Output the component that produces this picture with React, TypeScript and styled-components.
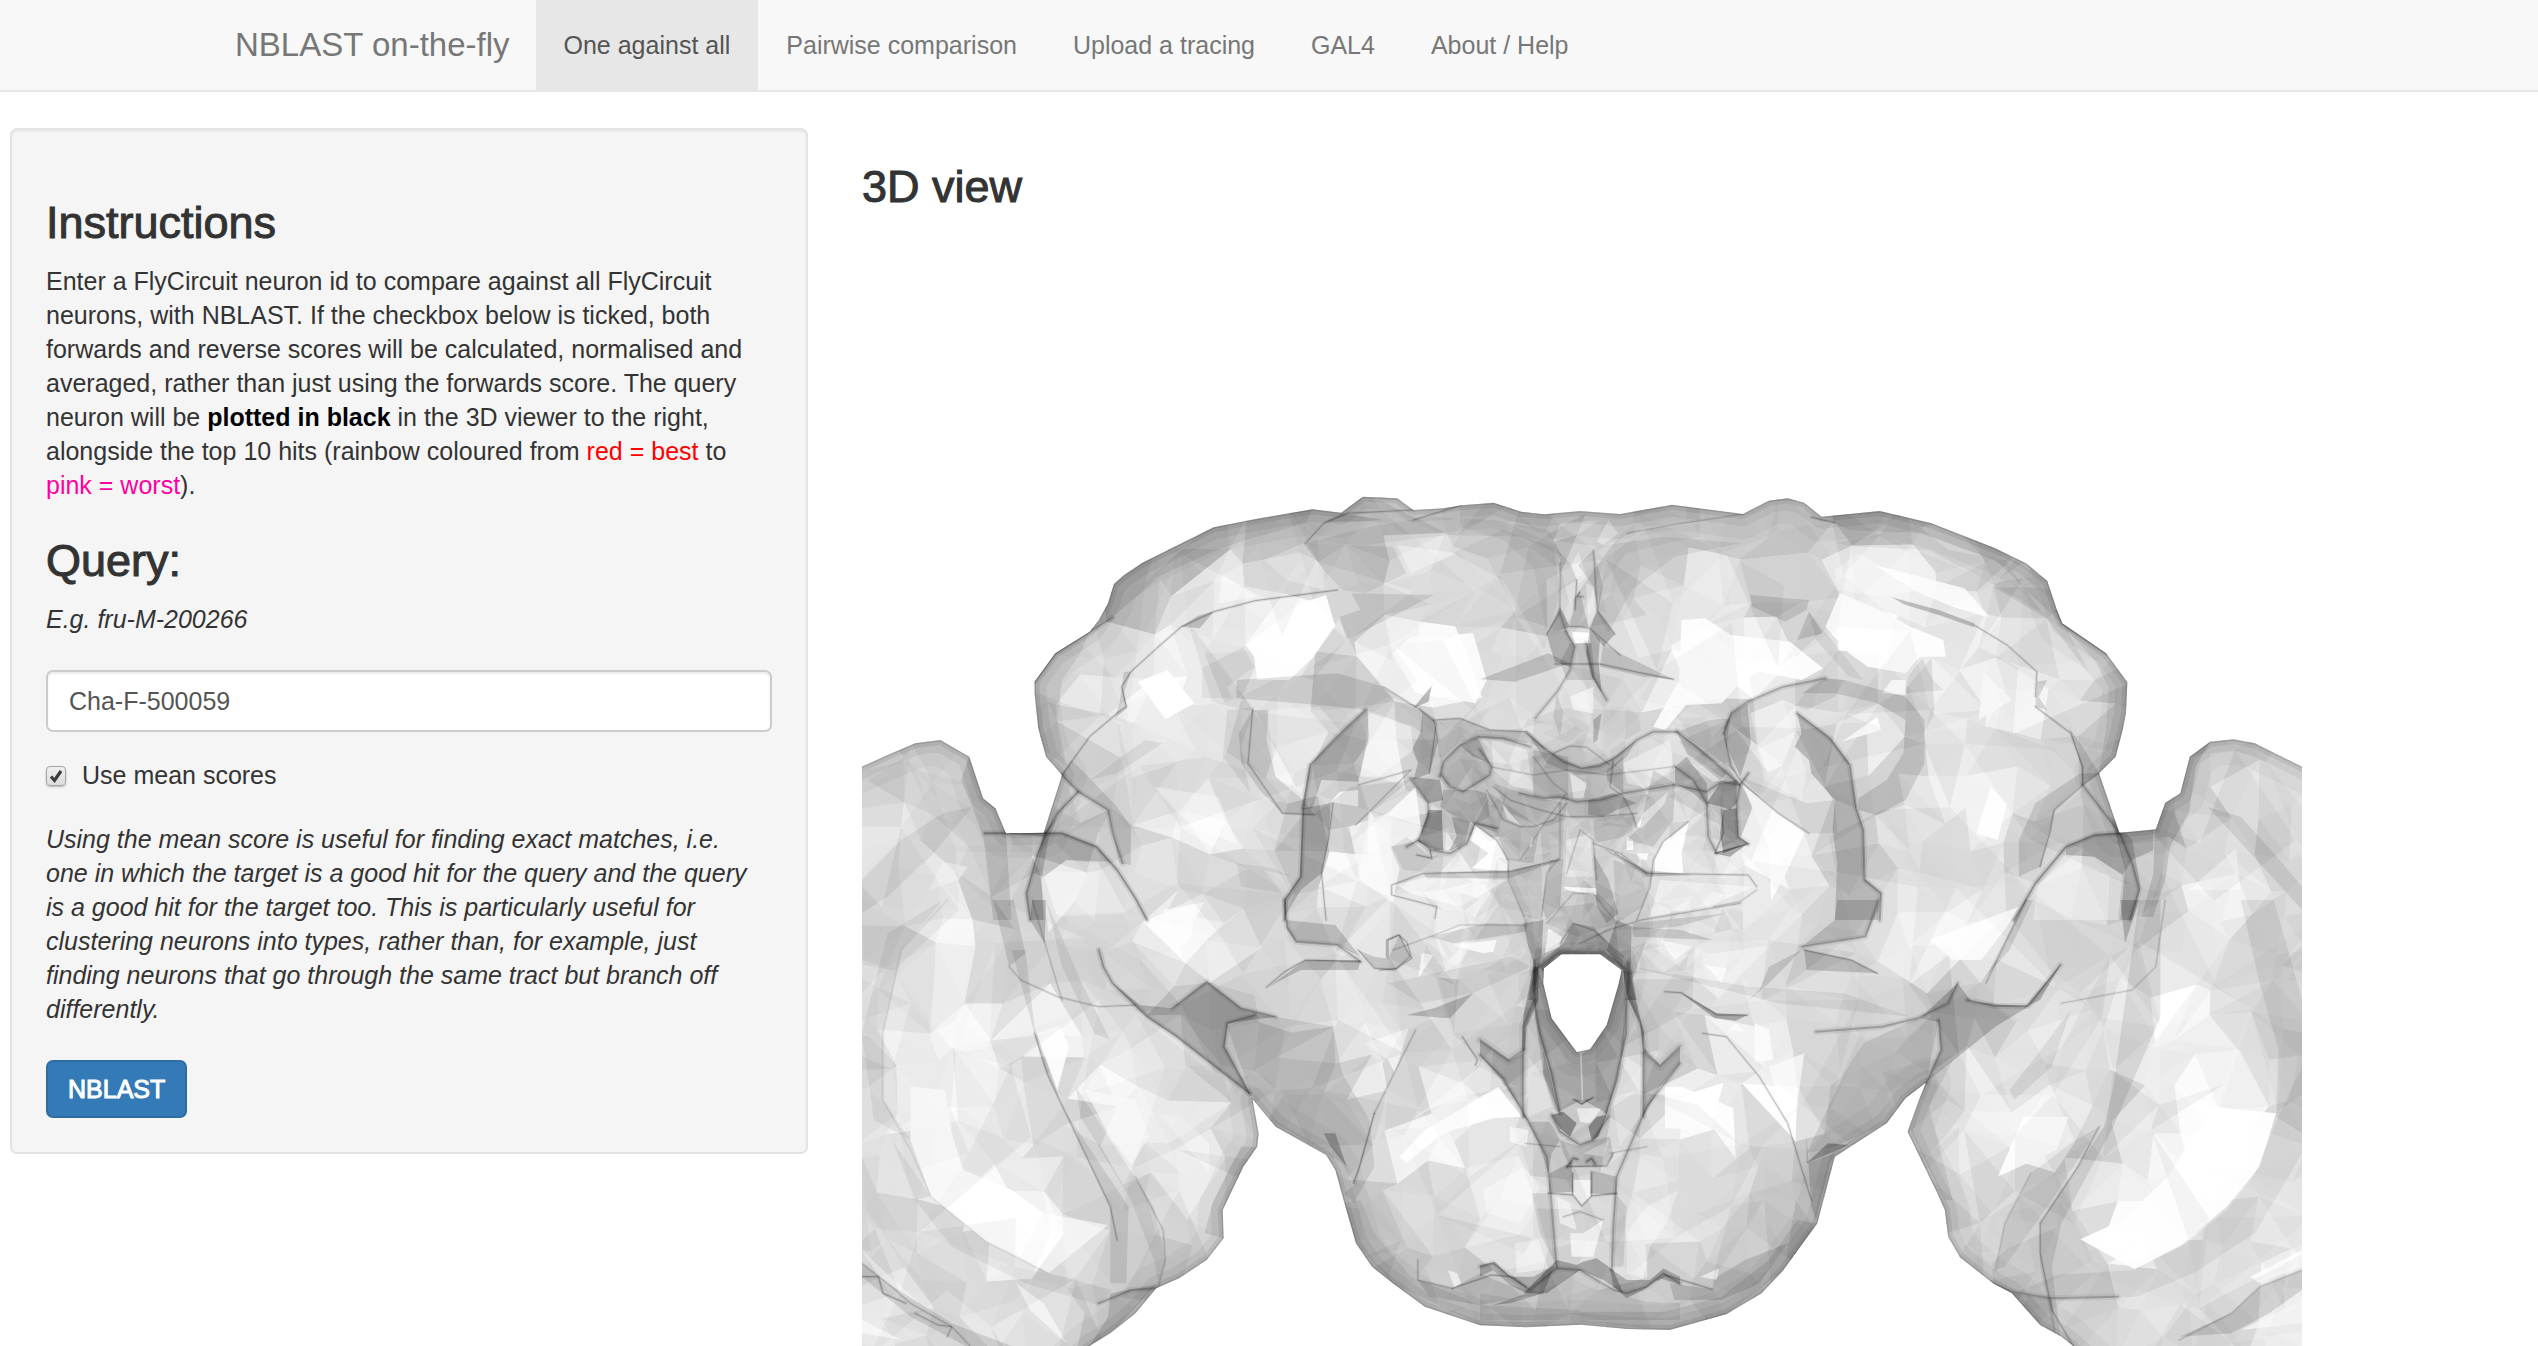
import React, { useMemo, useState } from "react";
import styled, { createGlobalStyle, css } from "styled-components";

const GlobalStyle = createGlobalStyle`
  *, *::before, *::after { box-sizing: border-box; }
  html, body { margin: 0; background: #fff; }
  body {
    font-family: "Liberation Sans", Arial, Helvetica, sans-serif;
    font-size: 25px;
    line-height: 34px;
    color: #333;
    overflow: hidden;
  }
`;

/* ---------- page parts ---------- */

const Navbar = styled.nav`
  background: #f8f8f8;
  border-bottom: 2px solid #e7e7e7;
`;

const NavInner = styled.div`
  display: flex;
  width: min(100%, 2124px);
  height: 90px;
  margin: 0 auto;
`;

const Brand = styled.a`
  display: flex;
  align-items: center;
  padding: 0 26px 0 28px;
  font-size: 33px;
  color: #777;
  text-decoration: none;
`;

const NavList = styled.ul`
  display: flex;
  margin: 0;
  padding: 0;
  list-style: none;
`;

const NavLink = styled.a<{ $active?: boolean }>`
  display: flex;
  align-items: center;
  height: 90px;
  padding: 0 28px;
  color: #777;
  text-decoration: none;
  ${(p) =>
    p.$active &&
    css`
      background: #e7e7e7;
      color: #555;
    `}
`;

const Page = styled.div`
  display: grid;
  grid-template-columns: 1fr 2fr;
  align-items: start;
  padding-top: 36px;
`;

const SidebarColumn = styled.aside`
  padding: 0 38px 0 10px;
`;

const Well = styled.form`
  display: flex;
  flex-direction: column;
  align-items: flex-start;
  padding: 34px;
  background: #f5f5f5;
  border: 2px solid #e3e3e3;
  border-radius: 7px;
  box-shadow: inset 0 2px 2px rgba(0, 0, 0, 0.05);
`;

const Heading = styled.h3`
  margin: 35px 0 17px;
  font-size: 45px;
  line-height: 48px;
  font-weight: 400;
  -webkit-text-stroke: 1px currentColor;
`;

const Paragraph = styled.p`
  margin: 0;
`;

const Note = styled(Paragraph)`
  padding-right: 16px;
  font-style: italic;
`;

const Strong = styled.strong`
  color: #000;
`;

const Tint = styled.span<{ $color: string }>`
  color: ${(p) => p.$color};
`;

const TextInput = styled.input`
  width: 100%;
  height: 62px;
  margin: 34px 0 26px;
  padding: 0 21px;
  font: inherit;
  color: #555;
  background: #fff;
  border: 2px solid #ccc;
  border-radius: 7px;
  outline: none;
  box-shadow: inset 0 2px 2px rgba(0, 0, 0, 0.075);
`;

const CheckLabel = styled.label`
  display: flex;
  align-items: center;
  gap: 16px;
  margin-bottom: 30px;
`;

const CheckBox = styled.span`
  display: grid;
  margin-top: 2px;
  & > * {
    grid-area: 1 / 1;
  }
  svg {
    pointer-events: none;
  }
`;

const CheckInput = styled.input`
  appearance: none;
  width: 20px;
  height: 20px;
  margin: 0;
  border: 1px solid #a5a5a5;
  border-radius: 4px;
  background: linear-gradient(#f0f0f0, #dcdcdc);
  box-shadow: 0 1px 2px rgba(0, 0, 0, 0.25);
`;

const SubmitButton = styled.button`
  height: 58px;
  margin-top: 34px;
  padding: 0 20px;
  font: inherit;
  color: #fff;
  background: #337ab7;
  border: 2px solid #2e6da4;
  border-radius: 7px;
  -webkit-text-stroke: 1px currentColor;
`;

const MainColumn = styled.main`
  padding-left: 16px;
`;

const Viewer = styled.svg`
  display: block;
  width: 1440px;
  max-width: 100%;
`;

/* ---------- brain surface ---------- */

type Tile = "ul" | "ur" | "ll" | "lr" | "c" | "t" | "k";
type Pt = [number, number];

// Each tile of the model is digitised on its own grid: origin and step.
const TILES: Record<Tile, [number, number, number, number]> = {
  ul: [860, 480, 720 / 1568, 1 / 3],
  ur: [1580, 480, 740 / 1568, 1 / 3],
  ll: [860, 900, 720 / 1568, 1 / 3],
  lr: [1580, 900, 740 / 1568, 1 / 3],
  c: [1360, 660, 1 / 3, 1 / 3],
  t: [1460, 480, 1 / 3, 1 / 3],
  k: [1480, 940, 1 / 3, 1 / 3],
};

const place = (tile: Tile, x: number, y: number): Pt => {
  const [ox, oy, sx, sy] = TILES[tile];
  return [Math.round((ox + x * sx) * 10) / 10, Math.round((oy + y * sy) * 10) / 10];
};

const trace = (tile: Tile, pts: string) =>
  pts
    .trim()
    .split(/\s+/)
    .map((p) => {
      const [x, y] = p.split(",").map(Number);
      return place(tile, x, y).join(",");
    })
    .join(" ");

const OUTLINE =
  "M" +
  [
    trace("ul", "380,605 425,520 500,455 520,420 540,370 553,312 575,285 615,248 770,142 870,115 985,88 1048,98 1095,50 1170,55 1205,90 1270,85 1310,76 1380,68 1440,95 1490,103 1568,93"),
    trace("ur", "0,93 85,102 195,74 345,102 400,62 440,55 475,68 512,110 635,93 745,130 880,205 945,250 990,302 1012,395 1022,430 1115,520 1160,607 1157,700 1150,750 1135,830 1100,880 1143,1058 1220,1048 1240,968 1272,940 1292,830 1335,785 1385,778 1430,790 1530,860 1700,980"),
    trace("lr", "1700,1600 1245,1600 1045,1338 1020,1310 975,1275 915,1180 875,1150 805,1072 780,1010 773,930 757,880 694,695 718,600 733,548 690,595 650,670 540,770 503,970 430,1112 385,1180 310,1243 190,1290 100,1287 0,1274"),
    trace("ll", "1568,1274 1450,1282 1350,1276 1230,1220 1160,1150 1115,1100 1080,1030 1055,910 1035,810 1015,765 905,680 855,598 868,700 865,740 835,800 790,930 792,1015 755,1080 695,1135 645,1165 600,1240 545,1300 500,1338 300,1600 -150,1600"),
    trace("ul", "-150,960 4,860 60,825 120,790 175,780 238,830 268,955 295,985 318,1060 400,1058 440,885 405,830 388,745 380,640"),
  ].join(" ") +
  "Z M" +
  trace("k", "245,43 360,43 425,90 415,135 380,255 330,328 290,336 215,235 190,130 192,85") +
  "Z";

// Surface brightness samples: x, y, grey.
const TONES: Record<string, string> = {
  ul: "200,850,205 100,900,205 60,1050,225 50,1250,222 170,1200,232 250,1100,200 290,1250,185 360,1100,180 460,1090,180 450,1200,235 560,1200,215 450,600,205 420,720,200 500,650,228 480,900,200 560,500,215 600,350,185 650,300,185 700,230,180 750,330,225 840,310,235 900,150,190 900,250,220 1000,130,180 1100,80,185 1150,180,185 1050,300,205 1200,230,230 1350,130,195 1400,230,200 1500,150,195 1450,400,195 1300,350,215 1380,480,215 1100,420,200 1150,520,240 1250,550,250 940,450,250 900,540,250 700,500,235 760,560,215 650,640,250 700,750,225 760,650,230 780,900,220 850,600,210 1050,620,200 900,700,215 840,800,200 960,800,238 920,900,232 1050,800,200 1150,800,235 1230,800,195 1050,950,205 990,1050,185 960,1200,195 700,1000,238 750,1050,245 620,950,215 580,1050,195 650,1150,215 750,1200,215 870,1080,225 850,1180,205 1060,1150,240 1150,950,220 1120,1100,250 1200,1150,215 1270,1030,185 1320,870,195 1400,850,205 1450,700,215 1500,900,190 1500,1000,195 1540,600,220 1530,1150,205 1300,1230,235 1450,1250,210 1080,1250,238",
  ur: "150,180,200 100,250,190 80,400,195 200,350,225 300,150,195 350,230,205 280,330,235 430,180,190 300,430,222 350,540,250 250,600,250 480,320,205 430,380,200 600,120,175 600,260,235 720,300,235 760,220,210 850,220,185 880,330,215 960,350,190 620,450,250 700,560,225 860,450,232 800,650,235 880,650,245 750,580,215 1000,470,205 1060,560,225 1120,650,195 1060,720,220 950,750,235 1100,800,195 980,830,215 820,800,225 900,1000,240 780,1000,235 700,750,200 600,760,240 550,650,205 650,900,200 420,800,240 330,730,200 520,850,200 560,1000,195 480,950,225 460,1100,238 370,1100,245 580,1150,195 250,800,210 150,880,215 200,1000,215 300,1000,190 60,950,185 30,700,205 120,600,215 120,720,205 30,1100,200 100,1200,215 250,1150,220 300,1240,220 650,1100,228 800,1120,215 720,1230,225 850,1230,225 960,1100,200 1050,1030,205 1080,1090,185 1130,1150,195 1050,1200,225 1170,1250,190 1240,1050,185 1300,900,195 1380,850,205 1400,950,225 1480,950,215 1300,1130,215 1380,1180,235 1480,1130,205 1340,1280,238",
  ll: "50,100,205 100,250,218 20,500,205 40,900,208 100,800,225 200,100,238 220,400,240 150,600,245 90,500,240 280,650,230 330,820,228 260,920,252 400,1020,250 330,200,210 300,100,215 400,500,205 420,400,250 450,650,200 520,850,205 560,1000,200 500,400,222 560,600,250 600,700,242 650,450,222 740,420,205 700,700,240 700,850,228 620,900,205 720,1000,215 800,750,205 820,600,210 450,1150,205 200,1050,220 100,1100,210 300,1200,220 400,1230,218 600,1150,195 560,1250,195 60,1200,225 180,1280,205 450,200,205 560,150,215 700,100,245 800,120,232 650,250,215 850,180,210 700,340,185 770,400,185 900,450,190 950,550,190 1000,650,190 1060,550,205 1030,300,225 950,270,215 1150,300,225 1100,500,240 1000,100,205 1100,50,230 1180,130,215 1300,150,235 1400,200,215 1280,320,200 1250,450,215 1200,600,210 1300,600,240 1250,700,250 1200,850,210 1100,950,190 1350,750,225 1400,950,228 1250,950,210 1450,1050,225 1200,1100,190 1300,1100,200 1350,1200,195 1500,1200,190 1450,850,225 1400,480,200 1440,380,205 1470,250,180 1500,400,195 1470,600,205 1520,800,205 1540,1000,200 1540,550,195",
  lr: "40,50,190 130,60,205 200,150,225 300,220,235 250,300,210 350,180,215 400,80,225 560,80,205 500,180,205 480,280,215 600,260,210 700,150,230 800,100,245 900,150,225 750,30,235 800,320,190 870,330,185 700,450,190 600,550,190 560,650,185 640,400,205 500,500,210 420,450,232 440,600,245 350,420,235 250,430,205 300,550,225 240,620,250 180,750,225 300,800,222 250,950,218 400,750,205 430,900,200 380,1050,200 140,1000,225 50,1000,205 40,800,200 100,600,205 140,450,190 50,500,190 100,300,185 200,1150,190 330,1180,190 150,1240,195 50,1220,200 450,1000,180 500,800,185 760,620,205 850,500,215 850,600,238 950,750,250 800,700,230 780,850,205 900,850,215 850,1000,205 980,900,200 1000,1050,195 1000,500,215 1000,400,230 950,380,210 1000,650,240 1080,700,205 1120,600,205 1060,350,215 1100,150,205 1150,250,222 1250,350,245 1300,200,225 1250,500,232 1200,700,230 1150,850,232 1350,600,250 1300,800,252 1200,1000,252 1400,700,240 1450,500,222 1400,250,215 1450,100,208 1500,400,205 1500,700,210 1400,1000,215 1480,950,225 1300,1080,220 1100,1130,200 950,1180,195 1050,1280,205 1200,1200,220 1350,1280,215 1500,1250,240 950,50,215 1050,100,210",
  t: "100,150,196 200,200,198 230,300,195 100,300,215 240,400,198 150,450,220 270,200,190 350,130,212 440,150,210 500,250,195 450,330,198 500,400,205 560,350,215 600,200,200 560,450,225 350,250,225 400,370,215 320,380,215",
  k: "60,200,215 150,420,222 90,560,225 100,750,232 60,850,225 180,700,215 160,900,225 260,770,225 300,900,235 380,800,215 250,950,205 200,650,200 450,420,215 550,200,205 520,700,228 430,620,215 500,900,228 300,1100,202 250,450,195 360,450,190",
};

// Folds, seen as darker patches: tile, opacity, points.
const FOLDS: [Tile, number, string][] = [
  ["ul", 0.12, "440,885 475,935 540,990 565,1150 590,1155 590,1040 560,980 490,880 460,840"],
  ["ul", 0.16, "318,1060 440,1060 515,1100 545,1145 450,1140 400,1190 380,1180 400,1070"],
  ["ul", 0.18, "400,1060 475,935 430,1010 410,1080 395,1200 400,1320 370,1320 362,1240"],
  ["ul", 0.12, "238,830 268,955 295,985 318,1060 330,1320 290,1320 270,1080 245,980 220,900"],
  ["ul", 0.07, "4,1200 90,1080 180,1000 245,980 160,1120 60,1250 4,1300"],
  ["ul", 0.2, "700,440 735,408 770,395 740,445"],
  ["ul", 0.14, "575,575 590,575 575,640 582,685 555,715 565,670"],
  ["ul", 0.12, "855,690 825,760 830,850 870,930 920,1000 990,1005 965,960 905,890 885,780 890,690"],
  ["ul", 0.07, "800,690 860,680 830,800 850,940 790,830"],
  ["ul", 0.12, "820,600 1040,580 1140,620 1210,680 1150,650 1100,690 1000,675 820,655"],
  ["ul", 0.08, "1100,690 1150,650 1225,695 1225,760 1205,740"],
  ["ul", 0.2, "1105,685 1108,770 1085,905 1005,900 985,985 960,990 980,855 1040,770"],
  ["ul", 0.2, "965,985 1025,970 1020,1080 1005,1180 960,1230 925,1310 925,1260 958,1190 962,1080"],
  ["ul", 0.09, "1070,920 1200,900 1080,1035 1020,1050 990,1000"],
  ["ul", 0.22, "1215,680 1250,715 1260,780 1240,880 1205,900 1215,850 1203,805 1220,760 1225,700"],
  ["ul", 0.28, "1245,618 1238,665 1205,685 1225,650"],
  ["ul", 0.1, "1070,340 1250,345 1060,480 1045,410 1090,390"],
  ["ul", 0.08, "1160,200 1190,280 1100,340 1050,330 1010,270 970,190"],
  ["ul", 0.06, "1030,440 1060,480 985,600 960,590"],
  ["ul", 0.15, "1010,125 1050,100 1140,120 1085,125"],
  ["ul", 0.06, "970,190 1110,140 1240,110 1380,120 1500,150 1530,230 1440,170 1280,165 1100,195"],
  ["ul", 0.05, "1290,220 1400,300 1490,510 1500,460 1525,330 1510,200 1400,150"],
  ["ul", 0.06, "745,565 835,500 858,560 800,620 810,655 745,655"],
  ["ul", 0.07, "620,780 660,790 560,880 500,900"],
  ["ul", 0.06, "820,1150 900,1165 940,1190 880,1170 920,1240 830,1220"],
  ["ul", 0.08, "553,312 615,248 770,142 985,88 970,130 840,180 760,220 650,290 560,400 520,430"],
  ["ul", 0.07, "380,605 425,520 500,455 480,520 440,600 430,720 450,860 400,810 388,745"],
  ["ur", 0.13, "560,600 690,650 730,720 730,850 690,960 630,1005 590,990 590,955 650,900 685,820 690,720 630,670 540,640 470,640 520,595"],
  ["ur", 0.07, "355,665 430,620 520,595 560,600 540,650 480,690 430,660 360,700"],
  ["ur", 0.2, "355,670 362,790 340,890 310,800 305,740 320,700"],
  ["ur", 0.22, "460,700 530,775 570,850 585,985 540,960 490,880 485,840 455,800 470,760"],
  ["ur", 0.08, "340,890 480,970 540,960 545,1060 485,1060 420,1000"],
  ["ur", 0.17, "540,960 585,985 600,1050 602,1195 638,1240 632,1320 540,1320 545,1150 535,1050"],
  ["ur", 0.24, "660,352 760,390 835,430 835,442 760,405 690,375"],
  ["ur", 0.15, "968,605 990,600 972,650 990,690 965,680"],
  ["ur", 0.13, "1100,880 1060,915 1005,990 975,1160 930,1190 930,1080 965,970 1060,880"],
  ["ur", 0.12, "1035,740 1065,800 1100,880 1065,915 1060,850"],
  ["ur", 0.18, "1030,1100 1090,1065 1215,1050 1215,1110 1170,1140 1150,1185 1090,1130 1030,1125"],
  ["ur", 0.18, "1125,1010 1170,1080 1188,1220 1170,1320 1145,1320 1155,1170"],
  ["ur", 0.14, "1240,968 1272,940 1292,830 1335,785 1305,860 1290,1000 1250,1100 1240,1200 1215,1310 1190,1310 1215,1180 1218,1048"],
  ["ur", 0.09, "1330,980 1400,1010 1470,1120 1530,1220 1530,1290 1440,1150"],
  ["ur", 0.12, "360,345 485,360 480,390 435,425 365,380"],
  ["ur", 0.14, "485,395 515,460 460,480"],
  ["ur", 0.07, "485,395 545,500 600,600 570,590 500,480"],
  ["ur", 0.08, "725,535 745,595 770,630 690,640 695,590"],
  ["ur", 0.06, "540,190 720,140 780,210 900,240 980,400 860,300 740,210 590,200"],
  ["ur", 0.07, "30,200 180,170 340,190 200,230 110,330 60,460 30,380"],
  ["ur", 0.06, "215,780 320,715 305,760 320,870 210,790"],
  ["ur", 0.08, "512,110 635,93 745,130 880,205 990,302 1020,430 960,350 880,240 720,160 570,150"],
  ["ur", 0.08, "1020,430 1115,520 1160,607 1150,750 1135,830 1100,880 1115,740 1120,620 1090,540"],
  ["t", 0.06, "0,80 110,70 220,105 350,95 480,103 650,75 720,85 720,125 560,140 420,200 300,185 180,125 0,130"],
  ["t", 0.05, "0,130 130,125 290,195 300,400 260,460 220,260 130,180 0,140"],
  ["t", 0.05, "440,230 560,150 720,130 720,170 620,190 500,220 420,320 440,400 410,390"],
  ["t", 0.1, "285,200 330,250 350,300 300,330 300,240"],
  ["t", 0.12, "400,210 430,320 415,390 400,320 355,255"],
  ["t", 0.25, "300,380 330,440 295,455 260,462"],
  ["t", 0.25, "412,390 465,462 430,500 390,445"],
  ["t", 0.14, "345,350 360,335 385,440 330,440"],
  ["t", 0.24, "260,462 320,450 345,500 330,560 285,545 270,500"],
  ["t", 0.24, "390,445 420,480 415,540 425,640 395,590 378,520"],
  ["t", 0.12, "330,490 395,490 405,600 320,600 300,545"],
  ["t", 0.16, "60,598 265,520 330,550 165,605"],
  ["t", 0.14, "430,490 480,520 640,598 550,590 420,560"],
  ["c", 0.1, "590,100 610,160 600,230 580,170"],
  ["c", 0.2, "700,180 725,160 712,240 700,250"],
  ["c", 0.12, "220,180 300,175 390,210 510,215 560,270 510,250 380,235 300,245 240,300"],
  ["c", 0.12, "950,215 1050,180 1110,175 1100,260 1130,340 1010,250"],
  ["c", 0.2, "300,255 355,235 390,310 340,290"],
  ["c", 0.1, "240,320 300,255 390,310 390,345 310,395 255,370"],
  ["c", 0.25, "150,350 240,360 250,420 205,430"],
  ["c", 0.32, "205,450 245,450 250,570 225,570 175,545"],
  ["c", 0.22, "275,470 330,485 315,550 265,575 290,530"],
  ["c", 0.16, "250,390 345,390 380,400 390,470 345,490 300,480 240,440"],
  ["c", 0.12, "390,400 540,500 520,610 440,600 410,520 345,490"],
  ["c", 0.08, "95,560 140,530 210,590 300,570 240,640 130,630"],
  ["c", 0.28, "1040,430 1080,370 1130,360 1130,430 1110,450 1085,440"],
  ["c", 0.33, "1090,450 1130,445 1135,530 1165,550 1090,580 1080,520"],
  ["c", 0.3, "1060,580 1165,550 1110,590"],
  ["c", 0.2, "945,320 980,290 1040,370 1045,440 1000,400 945,370"],
  ["c", 0.12, "880,330 945,370 940,480 880,560 800,540 840,500"],
  ["c", 0.16, "950,215 1010,260 1100,340 1080,360 980,280"],
  ["c", 0.15, "500,215 560,270 665,325 750,300 830,240 800,290 740,340 650,345 560,310"],
  ["c", 0.12, "520,270 625,290 625,420 520,410"],
  ["c", 0.16, "740,330 790,290 790,400 740,360"],
  ["c", 0.2, "685,420 760,400 830,430 770,450 730,470 685,465"],
  ["c", 0.1, "400,370 520,410 620,430 615,480 560,500 450,460"],
  ["c", 0.1, "700,480 820,460 830,500 790,530 705,550"],
  ["c", 0.08, "540,500 610,460 610,600 550,620"],
  ["c", 0.14, "190,640 450,630 600,600 450,655 200,655"],
  ["c", 0.16, "720,560 860,630 1000,645 860,650"],
  ["c", 0.08, "440,640 545,610 545,780 490,770"],
  ["c", 0.09, "760,600 880,640 850,740 770,790"],
  ["c", 0.14, "570,600 610,600 600,740 560,780 545,740"],
  ["c", 0.18, "700,580 745,660 775,760 740,790 710,740"],
  ["c", 0.24, "490,790 550,780 545,880 520,1020 505,1020 525,920 505,860"],
  ["c", 0.24, "770,780 815,800 812,920 830,1020 795,1020 790,930 740,870"],
  ["c", 0.18, "640,790 700,800 790,900 785,940 725,885 590,885 550,935 530,915 610,850"],
  ["c", 0.08, "600,740 700,730 770,790 650,830 560,790"],
  ["c", 0.12, "380,790 500,795 500,815 280,850 210,830"],
  ["c", 0.12, "820,790 1000,770 1100,760 950,800 820,810"],
  ["c", 0.15, "815,800 960,810 1060,840 820,830"],
  ["k", 0.2, "160,60 190,130 215,235 290,336 300,340 305,480 235,515 190,400 190,330 165,230"],
  ["k", 0.2, "425,90 440,200 430,330 380,520 310,480 305,340 330,328 380,255 415,135"],
  ["k", 0.3, "160,80 175,80 175,180 140,260 135,330 125,330 130,230"],
  ["k", 0.3, "430,90 450,100 470,190 492,280 490,350 480,250 440,170"],
  ["k", 0.16, "165,220 190,330 215,430 240,520 225,510 190,405"],
  ["k", 0.18, "440,200 425,330 400,440 380,520 410,420"],
  ["k", 0.22, "0,300 90,360 130,340 130,530 150,545 60,415 0,345"],
  ["k", 0.22, "490,320 540,375 600,320 600,370 540,440 490,530"],
  ["k", 0.2, "305,480 340,475 305,495 280,478"],
  ["k", 0.36, "215,525 250,515 290,550 270,590 240,565"],
  ["k", 0.36, "380,525 350,530 325,560 335,600 355,590"],
  ["k", 0.16, "145,545 210,545 240,600 215,640 205,700 180,620"],
  ["k", 0.14, "240,600 300,620 340,600 390,590 400,650 370,680 270,680 250,640"],
  ["k", 0.2, "210,700 275,665 280,755 205,760"],
  ["k", 0.18, "330,690 410,710 410,765 330,760"],
  ["k", 0.1, "155,760 210,760 230,980 180,880"],
  ["k", 0.1, "405,760 440,800 430,980 395,980"],
  ["k", 0.28, "230,960 290,975 310,965 350,955 400,990 430,1060 370,1020 300,990 200,1060 130,1060 160,1030"],
  ["k", 0.24, "0,975 45,965 90,1010 160,1010 225,975 190,1060 90,1090 40,1095 140,1060 90,1035 40,990 0,1010"],
  ["k", 0.24, "390,985 440,1020 510,1020 550,985 600,1010 600,1035 540,1015 490,1050 440,1075 400,1040"],
  ["k", 0.08, "0,1060 120,1080 240,1030 300,985 400,1060 500,1085 600,1090 600,1140 0,1140"],
  ["ll", 0.22, "550,250 610,315 680,325 755,245 830,325 905,350 800,370 793,440 848,580 690,410 625,350"],
  ["ll", 0.1, "800,380 860,345 905,350 1030,380 1050,520 1110,660 1080,860 1050,790 905,670 850,580"],
  ["ll", 0.18, "925,0 925,60 1035,75 1090,170 1040,135 950,125 930,90"],
  ["ll", 0.2, "1090,180 970,180 890,260 960,210 1085,210"],
  ["ll", 0.14, "1150,175 1175,105 1198,170 1165,210 1120,205 1085,150 1120,170"],
  ["ll", 0.22, "1335,280 1285,355 1190,345 1250,325"],
  ["ll", 0.07, "1150,250 1420,170 1460,200 1335,280 1220,310"],
  ["ll", 0.12, "1215,1140 1290,1165 1350,1120 1400,1150 1490,1180 1350,1215 1240,1190"],
  ["ll", 0.26, "1010,700 1035,700 1060,800 1025,740"],
  ["ll", 0.1, "1110,660 1120,800 1075,910 1055,880 1080,850"],
  ["ll", 0.1, "330,150 400,500 545,920 545,1150 580,1150 585,920 440,620 380,380 360,150"],
  ["ll", 0.12, "290,0 335,0 360,160 325,200"],
  ["ll", 0.2, "375,0 405,0 402,130 370,60"],
  ["ll", 0.08, "405,0 480,240 545,420 510,400 440,200"],
  ["ll", 0.08, "470,560 560,750 640,920 665,1080 650,1150 640,1080 590,900 480,650"],
  ["ll", 0.06, "70,720 155,890 275,1025 410,1120 550,1170 520,1215 360,1150 200,1040 120,900"],
  ["ll", 0.06, "180,0 90,150 50,400 50,600 110,720 30,660 4,400 60,100"],
  ["ll", 0.14, "545,1180 645,1155 560,1280 500,1338 540,1250"],
  ["ll", 0.1, "790,930 835,800 865,740 830,740 770,900 750,1000 792,1015"],
  ["ll", 0.12, "4,1090 60,1150 200,1270 330,1338 230,1338 110,1250 4,1130"],
  ["ll", 0.08, "1055,910 1080,1030 1160,1150 1350,1276 1568,1278 1568,1230 1350,1215 1200,1130 1120,1000 1090,900"],
  ["lr", 0.16, "480,700 490,920 500,960 530,790 540,760 480,790"],
  ["lr", 0.3, "480,790 525,730 570,735"],
  ["lr", 0.1, "715,355 760,360 735,540 650,670 540,740 480,760 560,520 600,430"],
  ["lr", 0.22, "720,355 800,250 830,305 950,320 880,380 735,545 765,450 760,365"],
  ["lr", 0.24, "940,325 1018,195 975,300"],
  ["lr", 0.16, "470,140 605,110 632,30 632,0 545,0 540,60"],
  ["lr", 0.18, "475,150 575,180 630,220 480,210"],
  ["lr", 0.28, "210,275 290,340 355,345 330,362 285,355"],
  ["lr", 0.14, "350,310 380,270 400,200 470,150 400,250"],
  ["lr", 0.07, "110,200 360,260 560,280 700,350 420,310"],
  ["lr", 0.12, "860,230 945,0 960,0 910,150"],
  ["lr", 0.1, "1185,0 1130,560 1110,680 975,970 975,1100 1010,1338 1020,1338 1000,1100 1020,970 1130,680 1230,350 1230,0"],
  ["lr", 0.08, "955,820 1050,720 1100,680 1000,900 900,1100 880,1110 900,970"],
  ["lr", 0.08, "1040,330 1000,500 920,600 910,570 960,480"],
  ["lr", 0.06, "1480,650 1430,820 1370,930 1280,1035 1170,1110 1010,1125 920,1180 1020,1200 1180,1190 1300,1120 1430,1000 1530,760 1530,500"],
  ["lr", 0.08, "1400,0 1440,250 1480,450 1475,650 1530,700 1530,300 1470,0"],
  ["lr", 0.14, "285,1135 350,1080 440,1030 380,1150 300,1200 200,1200 190,1150 280,1168"],
  ["lr", 0.1, "503,970 430,1112 310,1243 190,1290 0,1270 0,1235 180,1235 300,1190 400,1080 460,960"],
  ["lr", 0.22, "1145,0 1185,0 1155,130"],
  ["lr", 0.14, "1530,1110 1440,1160 1380,1240 1270,1310 1380,1300 1460,1240 1530,1170"],
  ["lr", 0.14, "915,1180 1000,1195 1010,1330 960,1260"],
  ["lr", 0.08, "700,690 733,548 790,480 740,620 790,900 773,900"],
];

// Facets that face the light: tile, opacity, points.
const LIGHTS: [Tile, number, string][] = [
  ["ul", 0.95, "1015,345 1035,440 985,535 935,600 865,600 858,530 840,495 905,430 960,370"],
  ["ul", 0.85, "1200,470 1335,460 1365,600 1340,670 1210,640 1160,520"],
  ["ul", 1, "605,605 670,570 728,670 665,718"],
  ["ul", 0.9, "1045,935 1085,930 1085,980 1025,965"],
  ["ul", 0.8, "1210,920 1225,1080 1155,1100 1175,1165 1160,1270 1090,1200 1065,1040 1150,1000"],
  ["ul", 0.5, "790,280 860,350 780,370"],
  ["ul", 0.4, "180,1145 235,1160 215,1200 150,1230"],
  ["ul", 0.3, "965,190 1010,270 1010,330 930,300 880,240"],
  ["ul", 0.3, "885,690 1000,680 1050,760 980,850 960,940 905,890"],
  ["ul", 0.4, "1110,700 1200,740 1205,810 1130,890 1090,890"],
  ["ul", 0.5, "640,920 780,950 820,1090 740,1050 700,1010"],
  ["ul", 0.8, "660,1300 750,1265 730,1320"],
  ["ul", 0.4, "1170,195 1300,220 1200,280"],
  ["ul", 0.3, "400,1190 450,1140 520,1150 580,1300 430,1310"],
  ["ur", 0.9, "550,340 620,380 700,440 770,480 775,530 720,530 690,580 610,560 570,520 520,440"],
  ["ur", 0.85, "625,255 815,325 870,415 790,380 720,340"],
  ["ur", 0.9, "215,420 265,415 320,465 445,485 515,565 470,600 380,575 345,600 300,670 225,675 180,750 155,740 210,600"],
  ["ur", 0.95, "855,575 915,660 845,720"],
  ["ur", 0.9, "870,920 905,970 885,1080 840,1060"],
  ["ur", 0.9, "345,915 420,1000 475,1060 430,1200 405,1260 400,1100"],
  ["ur", 0.9, "630,710 638,750 555,785"],
  ["ur", 0.9, "660,600 690,600 690,645 640,640"],
  ["ur", 0.3, "362,700 430,660 480,880 470,960 390,900"],
  ["ur", 0.35, "590,220 540,270 545,330 640,350 720,330"],
  ["ur", 0.35, "1030,1125 1090,1130 1150,1185 1140,1320 960,1320 970,1220"],
  ["ur", 0.5, "1390,1105 1400,1230 1290,1230"],
  ["t", 0.5, "410,185 445,120 475,160 430,195"],
  ["t", 0.35, "280,185 300,130 420,120 350,165"],
  ["t", 0.45, "335,250 355,215 380,290 355,310"],
  ["t", 0.4, "335,350 345,395 320,430 312,400"],
  ["t", 0.4, "378,310 400,320 412,390 385,440"],
  ["t", 1, "335,455 390,458 390,490 345,490"],
  ["c", 0.6, "1000,290 1095,360 1060,365 985,310"],
  ["c", 0.9, "425,430 480,495 440,475"],
  ["c", 0.9, "925,395 915,430 845,505 830,500 850,460"],
  ["c", 0.9, "800,530 820,540 820,570 800,570"],
  ["c", 0.9, "830,580 865,580 860,600 838,598"],
  ["c", 0.9, "505,560 518,530 515,560"],
  ["c", 0.95, "345,495 410,545 445,610 440,635 335,625 385,580 330,540"],
  ["c", 0.95, "885,600 910,545 985,490 965,580 970,640 885,640"],
  ["c", 0.8, "565,805 605,830 600,860 555,880"],
  ["c", 0.9, "610,680 710,685 710,705 620,690"],
  ["c", 0.6, "630,340 680,370 670,415 640,415"],
  ["c", 0.4, "395,240 500,270 520,390 460,380 400,330"],
  ["c", 0.4, "790,310 930,240 940,320 860,385 800,370"],
  ["c", 0.6, "630,110 700,80 700,160 640,150"],
  ["c", 0.4, "620,540 690,520 700,650 615,650"],
  ["c", 0.9, "270,855 410,840 400,875 370,880"],
  ["c", 0.9, "185,880 220,885 175,955"],
  ["c", 0.6, "110,675 200,650 440,660 300,740 150,700"],
  ["c", 0.5, "900,660 1180,680 1060,735 870,770"],
  ["k", 0.3, "145,350 190,410 215,500 145,530"],
  ["k", 0.35, "440,350 485,380 480,530 420,620 400,500"],
  ["k", 0.6, "290,505 365,505 330,550 300,545"],
  ["k", 0.5, "310,640 390,600 370,650"],
  ["k", 0.7, "280,720 335,720 330,770 305,795 280,760"],
  ["k", 0.6, "230,770 270,790 290,870 240,850"],
  ["k", 0.7, "270,880 310,880 370,840 340,950 275,950"],
  ["k", 0.45, "105,910 175,900 205,985 110,1000"],
  ["k", 0.4, "500,800 595,750 560,850 510,920 490,1015 440,1000 440,880"],
  ["k", 0.6, "90,560 145,570 140,620 90,605"],
  ["k", 0.4, "10,750 130,680 180,740 120,850 20,820"],
  ["ll", 0.95, "110,560 185,570 200,700 225,810 330,870 400,940 350,1070 275,1025 155,890 110,720"],
  ["ll", 0.6, "400,940 540,975 410,1120 350,1070"],
  ["ll", 0.9, "385,400 435,375 455,440 430,570"],
  ["ll", 0.7, "490,570 600,600 630,710 590,795 540,700"],
  ["ll", 0.4, "650,640 700,650 760,730 760,820"],
  ["ll", 0.95, "1175,770 1230,690 1390,560 1440,650 1380,655 1270,700 1190,790"],
  ["ll", 0.8, "660,30 735,10 720,120 690,150"],
  ["ll", 0.6, "1100,430 1195,385 1165,520 1150,480"],
  ["ll", 0.5, "4,1050 50,1110 130,1210 60,1170"],
  ["ll", 0.6, "4,1260 90,1320 4,1300"],
  ["ll", 0.6, "340,1150 400,1210 450,1330 370,1230"],
  ["ll", 0.6, "1280,1110 1300,1120 1310,1150 1295,1165"],
  ["ll", 0.4, "1350,500 1430,560 1300,590 1210,650"],
  ["lr", 0.9, "180,560 215,560 325,625 330,775 285,690 180,685"],
  ["lr", 0.85, "370,370 400,390 410,480 370,485"],
  ["lr", 0.8, "740,120 930,20 905,80 850,180 790,180"],
  ["lr", 0.95, "885,830 940,650 1035,650 1010,750"],
  ["lr", 0.95, "1340,620 1475,640 1440,800 1370,920 1275,1035 1175,1108 1060,1018 1150,960 1245,830"],
  ["lr", 0.6, "255,1130 295,1105 290,1140"],
  ["lr", 0.8, "330,370 350,395 315,390"],
  ["lr", 0.7, "400,500 475,460 460,620 430,640"],
  ["lr", 0.8, "1420,1130 1530,1050 1530,1100 1440,1150"],
  ["lr", 0.8, "1400,1290 1530,1200 1530,1270"],
  ["lr", 0.7, "170,120 240,140 200,180"],
  ["lr", 0.7, "265,195 310,205 300,250"],
];

// Creases: tile, width, opacity, points.
const CREASES: [Tile, number, number, string][] = [
  ["ul", 2, 0.3, "440,885 475,935 540,990 550,1060 572,1150"],
  ["ul", 2, 0.35, "475,935 430,1000 405,1060 385,1130 362,1240 370,1320"],
  ["ul", 2, 0.4, "272,1060 440,1060 515,1100 560,1170 600,1255 625,1320"],
  ["ul", 1, 0.35, "440,885 500,770 560,700 580,680 570,620 590,575 650,500 700,440 770,395 860,362 1040,330"],
  ["ul", 2, 0.35, "1100,690 1035,775 980,855 965,990 960,1190 925,1260 925,1320"],
  ["ul", 1, 0.3, "1030,970 1020,1080 1005,1180 1015,1320"],
  ["ul", 1, 0.25, "1085,915 1200,870 1080,1035"],
  ["ul", 1, 0.3, "855,690 845,850 920,1000 990,1005"],
  ["ul", 2, 0.3, "380,605 425,520 500,455 550,412"],
  ["ul", 1, 0.3, "970,190 1010,130 1060,100 1205,90"],
  ["ul", 1, 0.3, "1205,120 1310,76"],
  ["ul", 1, 0.25, "1140,620 1215,685 1255,730 1240,880"],
  ["ur", 2, 0.3, "305,760 320,700 355,665 430,620 520,595"],
  ["ur", 2, 0.35, "460,700 530,775 572,855 585,985 600,1050 603,1200 638,1240 635,1320"],
  ["ur", 1, 0.3, "305,760 320,860 345,910 420,1000 485,1060"],
  ["ur", 1, 0.3, "835,435 905,495 968,575 965,650"],
  ["ur", 1, 0.35, "965,680 1040,760 1065,860 1065,915 1005,990 995,1060 975,1160"],
  ["ur", 2, 0.3, "1065,915 1143,1058 1170,1150 1185,1230 1165,1320"],
  ["ur", 2, 0.4, "1143,1060 1090,1065 1030,1100 965,1210 920,1320"],
  ["ur", 1, 0.3, "1100,880 1065,915"],
  ["ur", 2, 0.3, "1012,395 1022,430 1115,520"],
  ["ur", 1, 0.35, "490,112 540,128"],
  ["ur", 1, 0.2, "100,160 195,135 345,102"],
  ["t", 1, 0.25, "300,250 300,400 260,462"],
  ["t", 1, 0.25, "400,210 412,390 465,462"],
  ["t", 1, 0.3, "350,300 345,390 M 360,335 350,350 370,350"],
  ["t", 1, 0.3, "330,440 360,440 390,445 480,525"],
  ["t", 1, 0.35, "285,552 420,552 540,578 640,598"],
  ["t", 2, 0.25, "300,400 320,460 345,500 330,570 295,630 225,715"],
  ["t", 2, 0.3, "378,490 400,590 440,660"],
  ["c", 2, 0.3, "500,220 560,270 610,305 665,325 720,318 770,290 830,240 880,215 950,215"],
  ["c", 1, 0.3, "220,180 300,175 390,210 500,215"],
  ["c", 2, 0.3, "240,350 250,305 300,255 355,230 430,235 510,260"],
  ["c", 2, 0.35, "950,215 1010,260 1080,320 1140,375 1165,340"],
  ["c", 2, 0.3, "245,345 270,380 310,395 390,345 395,320 360,270"],
  ["c", 2, 0.35, "140,560 175,540 215,570 270,580 320,550 345,490 410,505"],
  ["c", 1, 0.4, "170,585 215,595 210,570"],
  ["c", 2, 0.3, "150,355 205,430 205,470 175,540"],
  ["c", 2, 0.3, "945,320 1000,360 1040,430 1045,530 1070,580"],
  ["c", 2, 0.3, "945,375 1040,395 1085,365 1140,375 1130,430 1135,530 1165,552"],
  ["c", 1, 0.35, "1085,450 1090,520 1065,580 1165,552"],
  ["c", 2, 0.3, "480,400 550,415 600,410 650,425 720,420 790,400 940,375"],
  ["c", 1, 0.25, "400,380 450,420 540,450 620,470 720,470 830,460"],
  ["c", 1, 0.2, "390,320 520,345 620,330 740,345 940,320"],
  ["c", 1, 0.25, "580,280 630,258 680,262 750,315"],
  ["c", 1, 0.25, "380,390 430,480 480,500 520,500 580,480 620,430"],
  ["c", 1, 0.2, "520,290 580,370 620,400 560,480 480,600"],
  ["c", 1, 0.25, "760,300 750,380 790,410 820,470 830,500"],
  ["c", 1, 0.2, "600,430 600,590 560,640 545,770"],
  ["c", 1, 0.2, "660,510 620,640 M 660,510 700,540 710,660"],
  ["c", 1, 0.25, "700,550 780,580 860,640"],
  ["c", 1, 0.2, "340,490 410,540 445,600 445,660 500,790"],
  ["c", 1, 0.25, "985,485 910,545 880,600 870,680 830,780"],
  ["c", 1, 0.3, "600,598 450,635 190,640 95,675 95,705 230,740 225,775"],
  ["c", 1, 0.3, "765,580 860,640 1165,645 1190,680"],
  ["c", 1, 0.2, "1190,690 1140,725 1060,740"],
  ["c", 1, 0.2, "500,795 300,795 210,830 100,870"],
  ["c", 1, 0.25, "600,850 640,790 700,810 790,890"],
  ["c", 1, 0.2, "560,790 640,700 700,700 770,790"],
  ["c", 1, 0.3, "80,890 80,840 115,825 140,845 155,895 110,925 60,930"],
  ["k", 3, 0.22, "160,95 240,35 370,38 455,100"],
  ["k", 3, 0.25, "163,60 163,180 130,260 132,330 85,362 0,300"],
  ["k", 3, 0.22, "445,70 445,160 488,270 495,340 540,378 600,318"],
  ["k", 2, 0.35, "163,180 180,280 215,400 240,520"],
  ["k", 2, 0.35, "440,180 438,280 410,420 378,520"],
  ["k", 2, 0.3, "0,345 70,415 145,545 200,650 212,760 230,980"],
  ["k", 2, 0.3, "600,370 500,500 410,710 400,850 395,990"],
  ["k", 2, 0.3, "130,330 130,530 M 490,340 490,530"],
  ["k", 1, 0.4, "280,478 305,492 340,472"],
  ["k", 2, 0.35, "215,525 240,575 300,615 340,600 385,530"],
  ["k", 2, 0.4, "262,680 280,655 292,658 M 320,665 335,655 345,672"],
  ["k", 1, 0.35, "262,680 380,678 400,640"],
  ["k", 1, 0.35, "278,700 278,765 305,798 335,768 335,700 M 205,760 278,765 M 335,768 410,760"],
  ["k", 1, 0.2, "135,610 240,620 M 390,640 500,620"],
  ["k", 1, 0.25, "250,830 300,815 370,840"],
  ["k", 2, 0.3, "0,980 40,970 90,1010 150,1050 230,985 300,990 400,1050 440,1060 500,1040 550,1000 600,1030"],
  ["ll", 1, 0.25, "325,200 350,240 430,290 520,320 600,315"],
  ["ll", 2, 0.35, "520,150 530,200 550,250 625,350 690,410 848,580"],
  ["ll", 2, 0.3, "680,325 755,245 830,325 905,350"],
  ["ll", 2, 0.35, "860,345 800,370 793,440 848,580"],
  ["ll", 1, 0.4, "1120,640 1108,700 1090,790 1075,850"],
  ["ll", 1, 0.25, "1210,390 1120,640"],
  ["ll", 2, 0.3, "925,0 930,80 950,125 1040,135 1090,185"],
  ["ll", 1, 0.35, "1090,185 970,180 925,215 885,262"],
  ["ll", 1, 0.3, "1150,175 1150,120 1175,105 1198,170 1165,210 1120,205 1085,150"],
  ["ll", 1, 0.35, "1312,410 1345,480 1340,495"],
  ["ll", 1, 0.35, "1290,1165 1375,1125 1420,1130 1450,1160"],
  ["ll", 1, 0.25, "1215,1080 1215,1140 1290,1165"],
  ["ll", 1, 0.3, "380,400 410,530 545,920 560,1020"],
  ["ll", 1, 0.2, "375,0 405,140 440,300"],
  ["ll", 1, 0.2, "600,830 660,990 665,1080 650,1160"],
  ["ll", 2, 0.3, "645,1165 590,1170 520,1210"],
  ["ll", 1, 0.1, "190,0 90,150 50,400 50,600 110,750 155,890 275,1025 410,1120"],
  ["ll", 1, 0.25, "4,1090 60,1150 110,1210 200,1280 240,1338"],
  ["ll", 1, 0.3, "120,1240 170,1275 200,1280 190,1310"],
  ["ll", 1, 0.35, "4,1130 40,1130 50,1180 100,1210"],
  ["lr", 1, 0.3, "260,400 310,410 380,530 440,670 490,900"],
  ["lr", 2, 0.3, "800,250 780,310 715,355 640,380 500,395"],
  ["lr", 2, 0.35, "820,300 880,318 950,318 1018,195"],
  ["lr", 2, 0.3, "760,360 765,450 735,545"],
  ["lr", 1, 0.35, "475,150 575,180 630,220"],
  ["lr", 2, 0.25, "632,0 605,110 470,140"],
  ["lr", 1, 0.35, "180,275 215,278 290,345 355,345"],
  ["lr", 1, 0.25, "945,0 860,250"],
  ["lr", 1, 0.2, "1240,0 1220,200 1170,270 1020,310"],
  ["lr", 1, 0.3, "1100,680 1055,800 975,970 975,1060 1000,1230 1045,1338"],
  ["lr", 1, 0.15, "955,820 900,970 880,1110"],
  ["lr", 2, 0.25, "875,1150 915,1175 1000,1195 1140,1190"],
  ["lr", 1, 0.25, "733,548 700,640"],
  ["lr", 1, 0.35, "165,1140 180,1125 280,1168"],
  ["lr", 1, 0.25, "0,130 60,90 130,60 340,10"],
  ["lr", 1, 0.2, "1530,1110 1440,1160 1380,1240 1270,1320"],
];

const hash = (a: number, b: number, c: number) => {
  const v = Math.sin(a * 127.1 + b * 311.7 + c * 74.7) * 43758.5453;
  return v - Math.floor(v);
};

const SAMPLES = (Object.keys(TONES) as Tile[]).flatMap((tile) =>
  TONES[tile].split(" ").map((s) => {
    const [x, y, g] = s.split(",").map(Number);
    const [wx, wy] = place(tile, x, y);
    return [wx, wy, g];
  })
);

const toneAt = (x: number, y: number) => {
  let sum = 0;
  let weight = 0;
  for (const [sx, sy, g] of SAMPLES) {
    const d = (sx - x) ** 2 + (sy - y) ** 2 + 60;
    const w = 1 / (d * d);
    sum += g * w;
    weight += w;
  }
  return sum / weight;
};

// Irregular triangle sheet over an area of the viewport.
const sheet = (area: [number, number, number, number], step: number, seed: number) => {
  const [left, top, width, height] = area;
  const cols = Math.ceil(width / step);
  const rows = Math.ceil(height / step);
  const node = (i: number, j: number): Pt => [
    Math.round(left + (i + (hash(i, j, seed) - 0.5) * 0.9) * step),
    Math.round(top + (j + (hash(j, i, seed + 5) - 0.5) * 0.9) * step),
  ];
  const out: { pts: Pt[]; n: number }[] = [];
  for (let i = 0; i < cols; i++) {
    for (let j = 0; j < rows; j++) {
      const a = node(i, j);
      const b = node(i + 1, j);
      const c = node(i + 1, j + 1);
      const d = node(i, j + 1);
      const pair = hash(i, j, seed + 9) > 0.5 ? [[a, b, c], [a, c, d]] : [[a, b, d], [b, c, d]];
      pair.forEach((pts, k) => out.push({ pts, n: hash(i * 2 + k, j, seed + 3) }));
    }
  }
  return out;
};

const WHOLE: [number, number, number, number] = [820, 450, 1560, 960];
// The central complex has a much denser mesh than the lobes.
const CENTRAL: [number, number, number, number] = [1425, 715, 315, 250];

const BrainSurface = () => {
  const front = useMemo(
    () =>
      sheet(WHOLE, 36, 1).map(({ pts, n }) => {
        const cx = (pts[0][0] + pts[1][0] + pts[2][0]) / 3;
        const cy = (pts[0][1] + pts[1][1] + pts[2][1]) / 3;
        const g = Math.round(Math.min(255, toneAt(cx, cy) + 6 + (n - 0.5) * 10));
        return { d: pts.join(" "), fill: `rgb(${g},${g},${g})` };
      }),
    []
  );
  const back = useMemo(
    () =>
      [...sheet(WHOLE, 64, 7), ...sheet(CENTRAL, 20, 4)].map(({ pts, n }) => ({
        d: pts.join(" "),
        dark: n > 0.45,
        o: Math.abs(n - 0.45) * (n > 0.45 ? 0.09 : 0.26),
      })),
    []
  );

  return (
    <Viewer viewBox="862 228 1440 1118" role="img" aria-label="3D view of the fly brain">
      <defs>
        <clipPath id="brain">
          <path d={OUTLINE} clipRule="evenodd" />
        </clipPath>
      </defs>
      <g clipPath="url(#brain)">
        {front.map((t, i) => (
          <polygon key={i} points={t.d} fill={t.fill} stroke={t.fill} strokeWidth={1} />
        ))}
        {LIGHTS.map(([tile, o, pts], i) => (
          <polygon key={i} points={trace(tile, pts)} fill="#fff" fillOpacity={o} />
        ))}
        {back.map((t, i) => (
          <polygon key={i} points={t.d} fill={t.dark ? "#000" : "#fff"} fillOpacity={t.o} />
        ))}
        {FOLDS.map(([tile, o, pts], i) => (
          <polygon key={i} points={trace(tile, pts)} fill="#000" fillOpacity={o * 0.9} />
        ))}
        <g fill="none" stroke="#000" strokeLinejoin="round">
          <path d={OUTLINE} strokeWidth={50} strokeOpacity={0.03} />
          <path d={OUTLINE} strokeWidth={24} strokeOpacity={0.05} />
          <path d={OUTLINE} strokeWidth={10} strokeOpacity={0.07} />
          <path d={OUTLINE} strokeWidth={3} strokeOpacity={0.12} />
        </g>
        <g fill="none" stroke="#000" strokeLinejoin="round" strokeLinecap="round">
          {CREASES.map(([tile, w, o, pts], i) => {
            const d = pts
              .split(" M ")
              .map((part) => "M" + trace(tile, part))
              .join(" ");
            return (
              <g key={i}>
                <path d={d} strokeWidth={w * 3} strokeOpacity={o * 0.22} />
                <path d={d} strokeWidth={w} strokeOpacity={o * 0.7} />
              </g>
            );
          })}
        </g>
      </g>
    </Viewer>
  );
};

/* ---------- app ---------- */

const TABS = ["One against all", "Pairwise comparison", "Upload a tracing", "GAL4", "About / Help"];

export default function App() {
  const [tab, setTab] = useState(0);
  const [query, setQuery] = useState("Cha-F-500059");
  const [mean, setMean] = useState(true);

  return (
    <>
      <GlobalStyle />
      <Navbar>
        <NavInner>
          <Brand href="#">NBLAST on-the-fly</Brand>
          <NavList>
            {TABS.map((name, i) => (
              <li key={name}>
                <NavLink href="#" $active={i === tab} onClick={() => setTab(i)}>
                  {name}
                </NavLink>
              </li>
            ))}
          </NavList>
        </NavInner>
      </Navbar>
      <Page>
        <SidebarColumn>
          <Well onSubmit={(e) => e.preventDefault()}>
            <Heading>Instructions</Heading>
            <Paragraph>
              Enter a FlyCircuit neuron id to compare against all FlyCircuit neurons, with NBLAST. If the checkbox
              below is ticked, both forwards and reverse scores will be calculated, normalised and averaged, rather
              than just using the forwards score. The query neuron will be <Strong>plotted in black</Strong> in the 3D
              viewer to the right, alongside the top 10 hits (rainbow coloured from{" "}
              <Tint $color="#ff0000">red = best</Tint> to <Tint $color="#ff00a0">pink = worst</Tint>).
            </Paragraph>
            <Heading>Query:</Heading>
            <Note as="label" htmlFor="query">
              E.g. fru-M-200266
            </Note>
            <TextInput id="query" type="text" value={query} onChange={(e) => setQuery(e.target.value)} />
            <CheckLabel>
              <CheckBox>
                <CheckInput type="checkbox" checked={mean} onChange={(e) => setMean(e.target.checked)} />
                {mean && (
                  <svg width="20" height="20" viewBox="0 0 20 20" aria-hidden="true">
                    <path d="M5 10.5 L8.5 14.5 L15 5" fill="none" stroke="#3c3c3c" strokeWidth="3.2" />
                  </svg>
                )}
              </CheckBox>
              Use mean scores
            </CheckLabel>
            <Note>
              Using the mean score is useful for finding exact matches, i.e. one in which the target is a good hit for
              the query and the query is a good hit for the target too. This is particularly useful for clustering
              neurons into types, rather than, for example, just finding neurons that go through the same tract but
              branch off differently.
            </Note>
            <SubmitButton type="submit">NBLAST</SubmitButton>
          </Well>
        </SidebarColumn>
        <MainColumn>
          <Heading>3D view</Heading>
          <BrainSurface />
        </MainColumn>
      </Page>
    </>
  );
}
